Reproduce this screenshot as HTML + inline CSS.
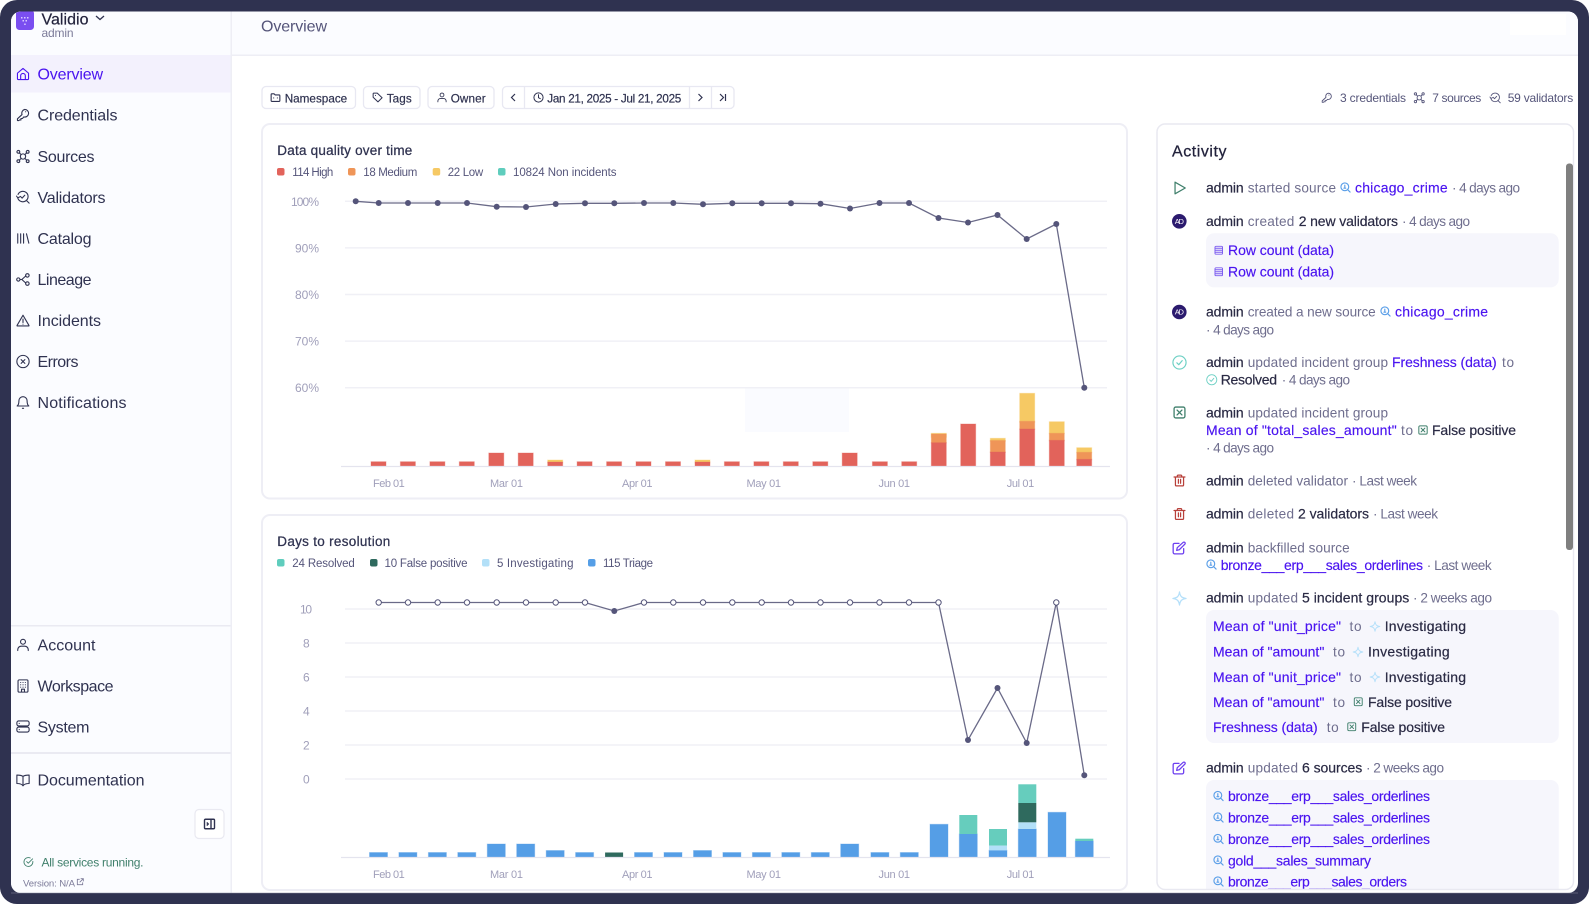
<!DOCTYPE html>
<html lang="en"><head><meta charset="utf-8"><title>Overview</title>
<style>
html,body{margin:0;padding:0;background:#fff;width:1589px;height:905px;overflow:hidden}
svg{display:block}
text{font-family:"Liberation Sans",sans-serif;white-space:pre}
.nav{font-size:16px;fill:#2f3250}
.btn{font-size:11.7px;fill:#2f3250;stroke:#2f3250;stroke-width:.2}
.leg{font-size:11.5px;fill:#55557a}
.ax{font-size:11px;fill:#a09fba}
.tt{font-size:13.5px;fill:#2f3250;stroke:#2f3250;stroke-width:.25}
.g{font-size:13.6px;fill:#6f6e8e}
.d{font-size:14px;fill:#2a2a44;stroke:#2a2a44;stroke-width:.2}
.p{font-size:14px;fill:#4a14f0;stroke:#4a14f0;stroke-width:.15}
.s{fill:none;stroke-width:1.9;stroke-linecap:round;stroke-linejoin:round}
.sm{font-size:12px;fill:#55557a}
</style></head><body>
<svg xmlns="http://www.w3.org/2000/svg" width="1589" height="905" viewBox="0 0 1589 905">
<defs>
<clipPath id="inner"><rect x="11" y="11.5" width="1567" height="881.5" rx="10"/></clipPath>
<clipPath id="act"><rect x="1157" y="124" width="416" height="765"/></clipPath>
<symbol id="home" viewBox="0 0 24 24"><path class="s" stroke-width="2.100" stroke="currentColor" d="M2.500 10.500 12 2.500l9.500 8V20a1.500 1.500 0 0 1-1.500 1.500H4A1.500 1.500 0 0 1 2.500 20zM8 21.500V15a4 4 0 0 1 8 0v6.500"/></symbol>
<symbol id="key" viewBox="0 0 24 24"><path class="s" stroke="currentColor" d="M15 2.500a6.500 6.500 0 1 1-1.500 12.800L11 18H8.500v2.500H6l-1 1H2.500V18.500l7.800-7.300A6.500 6.500 0 0 1 15 2.500zM16.500 6.500h.1"/></symbol>
<symbol id="src" viewBox="0 0 24 24"><g class="s" stroke="currentColor"><circle cx="4" cy="4" r="2.400"/><circle cx="20" cy="4" r="2.400"/><circle cx="4" cy="20" r="2.400"/><circle cx="20" cy="20" r="2.400"/><path d="M6 6l2.500 2.500M18 6l-2.500 2.500M6 18l2.500-2.500M18 18l-2.500-2.500"/><circle cx="12" cy="12" r="4.500"/></g></symbol>
<symbol id="val" viewBox="0 0 24 24"><g class="s" stroke="currentColor"><path d="M3.500 7.500A9 9 0 1 1 3 13.500M3 13.500 1 10.500M3 13.500l3-1.500M17.500 17.500 22.500 22.500M7.500 11l3 3 4.500-5"/></g></symbol>
<symbol id="cat" viewBox="0 0 24 24"><path class="s" stroke="currentColor" d="M3 4v16M8 4v16M13 4v16M18 4l4 16"/></symbol>
<symbol id="lin" viewBox="0 0 24 24"><g class="s" stroke="currentColor"><circle cx="4" cy="12" r="2.800"/><circle cx="19.500" cy="5" r="3"/><circle cx="19.500" cy="19" r="3"/><path d="M7 12h3l6.700-6M10 12l6.700 6"/></g></symbol>
<symbol id="inc" viewBox="0 0 24 24"><path class="s" stroke="currentColor" d="M12 3 1.800 20.500a.6.6 0 0 0 .5.9h19.400a.6.600 0 0 0 .5-.9zM12 9.500v6M12 18.200v.1"/></symbol>
<symbol id="err" viewBox="0 0 24 24"><g class="s" stroke="currentColor"><circle cx="12" cy="12" r="10.500"/><path d="M8.800 8.800l6.400 6.400M15.200 8.800l-6.400 6.400"/></g></symbol>
<symbol id="bell" viewBox="0 0 24 24"><path class="s" stroke="currentColor" d="M12 2a7 7 0 0 0-7 7c0 5-1 7.500-3 9h20c-2-1.500-3-4-3-9a7 7 0 0 0-7-7zM11 22h2"/></symbol>
<symbol id="user" viewBox="0 0 24 24"><g class="s" stroke="currentColor"><circle cx="12" cy="6.500" r="4.200"/><path d="M3 21.500v-1.500a6 6 0 0 1 6-6h6a6 6 0 0 1 6 6v1.500"/></g></symbol>
<symbol id="bld" viewBox="0 0 24 24"><g class="s" stroke="currentColor"><rect x="3.500" y="1.500" width="17" height="21" rx="2"/><path d="M9.500 22v-4.500h5V22M8 6h.1M12 6h.1M16 6h.1M8 10h.1M12 10h.1M16 10h.1M8 14h.1M12 14h.1M16 14h.1"/></g></symbol>
<symbol id="srv" viewBox="0 0 24 24"><g class="s" stroke="currentColor"><rect x="1.500" y="2.500" width="21" height="8.500" rx="3"/><rect x="1.500" y="13" width="21" height="8.500" rx="3"/><path d="M5.500 6.800h.1M5.500 17.200h.1"/></g></symbol>
<symbol id="book" viewBox="0 0 24 24"><path class="s" stroke="currentColor" d="M12 6v16M12 6c-2-2-5-2.500-10.500-2.500V18c5 0 8.500 1 10.500 4 2-3 5.500-4 10.500-4V3.500C17 3.500 14 4 12 6z"/></symbol>
<symbol id="panel" viewBox="0 0 24 24"><g fill="none" stroke="currentColor" stroke-width="2.800" stroke-linejoin="round"><rect x="2" y="2.500" width="20" height="19" rx="2"/><path d="M15 2.500v19M6.500 9l3 3-3 3"/></g></symbol>
<symbol id="chk" viewBox="0 0 24 24"><g class="s" stroke="currentColor"><path d="M21.500 10.500V12A9.700 9.700 0 1 1 16 3.200"/><path d="M8 11l3.500 3.500L21 5"/></g></symbol>
<symbol id="ccirc" viewBox="0 0 24 24"><g class="s" stroke="currentColor"><circle cx="12" cy="12" r="10.500"/><path d="M7.800 12.500l3 3 5.500-6.500"/></g></symbol>
<symbol id="ext" viewBox="0 0 24 24"><g fill="none" stroke="currentColor" stroke-width="2.600"><path d="M11 4H4v16h16v-7M14 2h8v8M22 2 11 13"/></g></symbol>
<symbol id="fold" viewBox="0 0 24 24"><path class="s" style="stroke-width:2.400" stroke="currentColor" d="M2.500 19V5.500a1.500 1.500 0 0 1 1.500-1.500h5l2.500 2.500H20a1.500 1.500 0 0 1 1.500 1.500v11a1.500 1.500 0 0 1-1.500 1.500H4a1.500 1.500 0 0 1-1.500-1.500zM8 13h.1M16 13h.1"/></symbol>
<symbol id="tag" viewBox="0 0 24 24"><path class="s" style="stroke-width:2.200" stroke="currentColor" d="M2.500 3.500v8l10.500 10 9-9-10.500-10H3.500zM7.500 7.500h.1"/></symbol>
<symbol id="clock" viewBox="0 0 24 24"><g class="s" style="stroke-width:2.200" stroke="currentColor"><circle cx="12" cy="12" r="10"/><path d="M12 6v6.500l4 2"/></g></symbol>
<symbol id="mag" viewBox="0 0 24 24"><g class="s" style="stroke-width:2.500" stroke="currentColor"><circle cx="10.500" cy="10.500" r="8.500"/><path d="M16.800 16.800 22 22M10.500 7v5M8.500 13.500h4"/></g></symbol>
<symbol id="rows" viewBox="0 0 24 24"><g class="s" style="stroke-width:2.400" stroke="currentColor"><rect x="2.500" y="2" width="19" height="20" rx="2.500"/><path d="M2.500 7h19M2.500 12h19M2.500 17h19"/></g></symbol>
<symbol id="xsq" viewBox="0 0 24 24"><g class="s" style="stroke-width:2.400" stroke="currentColor"><rect x="2" y="2" width="20" height="20" rx="3"/><path d="M7.500 7.500l9 9M16.500 7.500l-9 9"/></g></symbol>
<symbol id="spark" viewBox="0 0 24 24"><path class="s" style="stroke-width:2" stroke="currentColor" d="M12 1.500C13 8.500 15.500 11 22.500 12 15.500 13 13 15.500 12 22.500 11 15.500 8.500 13 1.500 12 8.500 11 11 8.500 12 1.500z"/></symbol>
<symbol id="play" viewBox="0 0 24 24"><path class="s" style="stroke-width:2.100" stroke="currentColor" d="M3.500 2 21 12 3.500 22z"/></symbol>
<symbol id="trash" viewBox="0 0 24 24"><path class="s" style="stroke-width:2.300" stroke="currentColor" d="M2 5.500h20M8 5.500V3.500a1.500 1.500 0 0 1 1.500-1.500h5A1.500 1.500 0 0 1 16 3.500v2M4.500 5.500V20a2 2 0 0 0 2 2h11a2 2 0 0 0 2-2V5.500M10 10v7M14 10v7"/></symbol>
<symbol id="edit" viewBox="0 0 24 24"><path class="s" style="stroke-width:2.200" stroke="currentColor" d="M12 4H4.500a2.500 2.500 0 0 0-2.500 2.500v13A2.500 2.500 0 0 0 4.500 22h13a2.500 2.500 0 0 0 2.500-2.500V13M19 2.500a2 2 0 0 1 3 3L12.500 15l-4.500 1 1-4.500z"/></symbol>
</defs>

<rect width="1589" height="904" rx="17" fill="#2f3250"/>
<g clip-path="url(#inner)">
<rect x="11" y="11" width="1567" height="883" fill="#fff"/>

<!-- header -->
<rect x="232" y="11" width="1346" height="44" fill="#fbfcff"/>
<rect x="232" y="54.500" width="1346" height="1.500" fill="#eeeef5"/>
<rect x="1510" y="14" width="56" height="21" fill="#fff"/>
<text x="261" y="31.500" class="nav" style="fill:#55557a" textLength="66">Overview</text>

<!-- sidebar -->
<rect x="11" y="11" width="220" height="883" fill="#fbfcff"/>
<rect x="230.500" y="11" width="1.500" height="883" fill="#eeeef5"/>
<rect x="16" y="10" width="18" height="20" rx="3.500" fill="#7a4ef0"/>
<g fill="#d9ccff"><rect x="21" y="17" width="1.500" height="1.500"/><rect x="24" y="17" width="1.500" height="1.500"/><rect x="27" y="17" width="1.500" height="1.500"/><rect x="22.500" y="20" width="1.500" height="1.500"/><rect x="25.500" y="20" width="1.500" height="1.500"/><rect x="24.200" y="23.500" width="1.500" height="1.500"/></g>
<text x="41.500" y="24.500" font-size="16" fill="#22223c" stroke="#22223c" stroke-width=".2" textLength="47">Validio</text>
<path d="M96 16l4 3.500 4-3.500" fill="none" stroke="#2f3250" stroke-width="1.300"/>
<text x="41.500" y="37" font-size="12" fill="#7c7b99" textLength="32">admin</text>

<rect x="11" y="55" width="219.500" height="37.500" fill="#f3f1fd"/>
<g color="#2f3250">
<use href="#home" x="16" y="67" width="14" height="14" color="#4a14f0"/>
<use href="#key" x="16" y="108" width="14" height="14"/>
<use href="#src" x="16" y="149.500" width="14" height="14"/>
<use href="#val" x="16" y="190" width="14" height="14"/>
<use href="#cat" x="16" y="231.500" width="14" height="14"/>
<use href="#lin" x="16" y="272.500" width="14" height="14"/>
<use href="#inc" x="16" y="313.500" width="14" height="14"/>
<use href="#err" x="16" y="354.500" width="14" height="14"/>
<use href="#bell" x="16" y="395.500" width="14" height="14"/>
<use href="#user" x="16" y="638" width="14" height="14"/>
<use href="#bld" x="16" y="679" width="14" height="14"/>
<use href="#srv" x="16" y="719.500" width="14" height="14"/>
<use href="#book" x="16" y="773" width="14" height="14"/>
</g>
<text x="37.500" y="79.500" class="nav" style="fill:#4a14f0" textLength="65.500">Overview</text>
<text x="37.500" y="120.500" class="nav" textLength="80">Credentials</text>
<text x="37.500" y="162" class="nav" textLength="57">Sources</text>
<text x="37.500" y="203" class="nav" textLength="68">Validators</text>
<text x="37.500" y="244" class="nav" textLength="54">Catalog</text>
<text x="37.500" y="285" class="nav" textLength="54">Lineage</text>
<text x="37.500" y="326" class="nav" textLength="63.500">Incidents</text>
<text x="37.500" y="367" class="nav" textLength="41">Errors</text>
<text x="37.500" y="408" class="nav" textLength="89">Notifications</text>
<rect x="11" y="625" width="219.500" height="1.500" fill="#eaeaf2"/>
<text x="37.500" y="650.500" class="nav" textLength="58">Account</text>
<text x="37.500" y="691.500" class="nav" textLength="76">Workspace</text>
<text x="37.500" y="732.500" class="nav" textLength="52">System</text>
<rect x="11" y="752" width="219.500" height="2" fill="#eaeaf2"/>
<text x="37.500" y="785.500" class="nav" textLength="107">Documentation</text>
<rect x="195" y="809.500" width="29" height="29" rx="4" fill="#fff" stroke="#e9e9f1" stroke-width="1.200"/>
<use href="#panel" x="203.500" y="818" width="12" height="12" color="#2f3250"/>
<use href="#chk" x="23" y="856.500" width="11" height="11" color="#3f7f6b"/>
<text x="41.500" y="866.500" font-size="12" fill="#3f7f6b" textLength="102">All services running.</text>
<text x="23" y="886.500" font-size="9.600" fill="#7c7b99" textLength="52">Version: N/A</text>
<use href="#ext" x="76" y="878" width="8" height="8" color="#7c7b99"/>

<!-- toolbar -->
<g fill="#fff" stroke="#e8e8f2" stroke-width="1.300">
<rect x="262" y="86.500" width="93.500" height="22" rx="4"/>
<rect x="363.500" y="86.500" width="56.500" height="22" rx="4"/>
<rect x="428" y="86.500" width="66" height="22" rx="4"/>
<rect x="502.500" y="86.500" width="231.500" height="22" rx="4"/>
<path d="M524.500 86.500v22M689.500 86.500v22M711.500 86.500v22" fill="none"/>
</g>
<g color="#2f3250">
<use href="#fold" x="270" y="92" width="11" height="11"/>
<use href="#tag" x="372" y="92" width="11" height="11"/>
<use href="#user" x="436.500" y="92" width="11" height="11"/>
<use href="#clock" x="533" y="92" width="11" height="11"/>
</g>
<text x="284.700" y="102.500" class="btn" textLength="62.500">Namespace</text>
<text x="386.700" y="102.500" class="btn" textLength="25">Tags</text>
<text x="450.700" y="102.500" class="btn" textLength="35">Owner</text>
<text x="547.300" y="102.500" class="btn" textLength="134">Jan 21, 2025 - Jul 21, 2025</text>
<path d="M515 94l-3.500 3.500 3.500 3.500M698.500 94l3.500 3.500-3.500 3.500M720 94l3.500 3.500-3.500 3.500M725.500 94v7" fill="none" stroke="#2f3250" stroke-width="1.200"/>

<!-- right summary -->
<g color="#55557a">
<use href="#key" x="1321" y="92" width="11.500" height="11.500"/>
<use href="#src" x="1413.500" y="92" width="11.500" height="11.500"/>
<use href="#val" x="1489.500" y="92" width="11.500" height="11.500"/>
</g>
<text x="1340" y="102" class="sm" textLength="66">3 credentials</text>
<text x="1432.300" y="102" class="sm" textLength="49">7 sources</text>
<text x="1507.700" y="102" class="sm" textLength="65.500">59 validators</text>

<!-- card 1 -->
<rect x="262" y="124" width="865" height="374.500" rx="8" fill="#fff" stroke="#eeeef5" stroke-width="2"/>
<rect x="745" y="388" width="104" height="44" fill="#fafbff"/>
<text x="277.300" y="155" class="tt" textLength="135">Data quality over time</text>
<rect x="277" y="168" width="7.500" height="7.500" rx="2" fill="#e2635b"/>
<text x="292.300" y="176" class="leg" textLength="41">114 High</text>
<rect x="348" y="168" width="7.500" height="7.500" rx="2" fill="#ef9558"/>
<text x="363.300" y="176" class="leg" textLength="54">18 Medium</text>
<rect x="432.700" y="168" width="7.500" height="7.500" rx="2" fill="#f6c964"/>
<text x="447.700" y="176" class="leg" textLength="35.500">22 Low</text>
<rect x="498" y="168" width="7.500" height="7.500" rx="2" fill="#5fcdbd"/>
<text x="513" y="176" class="leg" textLength="103.500">10824 Non incidents</text>
<path d="M345 201.300H1107M345 247.900H1107M345 294.500H1107M345 341.100H1107M345 387.700H1107" fill="none" stroke="#f0f0f6" stroke-width="1.500"/>
<text x="291" y="206" class="ax" font-size="12" style="font-size:12px" textLength="28">100%</text>
<text x="295" y="252.500" class="ax" style="font-size:12px" textLength="24">90%</text>
<text x="295" y="299" class="ax" style="font-size:12px" textLength="24">80%</text>
<text x="295" y="345.500" class="ax" style="font-size:12px" textLength="24">70%</text>
<text x="295" y="392" class="ax" style="font-size:12px" textLength="24">60%</text>
<polyline fill="none" stroke="#6a6a88" stroke-width="1.300" points="355.700,201.300 378.700,203 408,203 437.700,203 467,203 496.700,206.700 526,207 555.700,204 585,203.300 614.300,203.300 644,203 673.300,203 703,204.300 732.300,203.300 761.700,203.300 791,203.300 820.500,203.700 850,208.500 879.500,203 909,203 938.500,218 968,222.500 997.500,215 1026.700,239 1056.300,224 1084.300,387.700"/>
<g fill="#55557a">
<circle cx="355.700" cy="201.300" r="3"/><circle cx="378.700" cy="203" r="3"/><circle cx="408" cy="203" r="3"/><circle cx="437.700" cy="203" r="3"/><circle cx="467" cy="203" r="3"/><circle cx="496.700" cy="206.700" r="3"/><circle cx="526" cy="207" r="3"/><circle cx="555.700" cy="204" r="3"/><circle cx="585" cy="203.300" r="3"/><circle cx="614.300" cy="203.300" r="3"/><circle cx="644" cy="203" r="3"/><circle cx="673.300" cy="203" r="3"/><circle cx="703" cy="204.300" r="3"/><circle cx="732.300" cy="203.300" r="3"/><circle cx="761.700" cy="203.300" r="3"/><circle cx="791" cy="203.300" r="3"/><circle cx="820.500" cy="203.700" r="3"/><circle cx="850" cy="208.500" r="3"/><circle cx="879.500" cy="203" r="3"/><circle cx="909" cy="203" r="3"/><circle cx="938.500" cy="218" r="3"/><circle cx="968" cy="222.500" r="3"/><circle cx="997.500" cy="215" r="3"/><circle cx="1026.700" cy="239" r="3"/><circle cx="1056.300" cy="224" r="3"/><circle cx="1084.300" cy="387.700" r="3"/>
</g>
<!-- bars 1 -->
<g fill="#f6c964" stroke="#f6c964" stroke-opacity=".35">
<rect x="547.700" y="460" width="15" height="3"/><rect x="695" y="460" width="15" height="3"/>
<rect x="931.300" y="433.300" width="15" height="4"/><rect x="990.300" y="438.300" width="15" height="3"/>
<rect x="1019.700" y="393.300" width="15" height="29"/><rect x="1049.300" y="421.700" width="15" height="12"/><rect x="1076.700" y="447.700" width="15" height="5"/>
</g>
<g fill="#ef9558" stroke="#ef9558" stroke-opacity=".35">
<rect x="931.300" y="434" width="15" height="9"/><rect x="990.300" y="440.500" width="15" height="12"/>
<rect x="1019.700" y="421.300" width="15" height="8"/><rect x="1049.300" y="433.300" width="15" height="7.500"/><rect x="1076.700" y="452.300" width="15" height="7.500"/>
</g>
<g fill="#e2635b" stroke="#e2635b" stroke-opacity=".35">
<rect x="371" y="461.700" width="15" height="4.500"/><rect x="400.400" y="461.700" width="15" height="4.500"/><rect x="429.900" y="461.700" width="15" height="4.500"/><rect x="459.300" y="461.700" width="15" height="4.500"/>
<rect x="488.800" y="453" width="15" height="13.200"/><rect x="518.200" y="453" width="15" height="13.200"/>
<rect x="547.700" y="462" width="15" height="4.200"/>
<rect x="577.100" y="461.700" width="15" height="4.500"/><rect x="606.600" y="461.700" width="15" height="4.500"/><rect x="636" y="461.700" width="15" height="4.500"/><rect x="665.500" y="461.700" width="15" height="4.500"/>
<rect x="695" y="462" width="15" height="4.200"/>
<rect x="724.400" y="461.700" width="15" height="4.500"/><rect x="753.900" y="461.700" width="15" height="4.500"/><rect x="783.300" y="461.700" width="15" height="4.500"/><rect x="812.800" y="461.700" width="15" height="4.500"/>
<rect x="842.200" y="453" width="15" height="13.200"/>
<rect x="872.400" y="461.700" width="15" height="4.500"/><rect x="901.700" y="461.700" width="15" height="4.500"/>
<rect x="931.300" y="442.700" width="15" height="23.500"/><rect x="960.700" y="424" width="15" height="42.200"/><rect x="990.300" y="452" width="15" height="14.200"/><rect x="1019.700" y="429" width="15" height="37.200"/><rect x="1049.300" y="440.300" width="15" height="25.900"/><rect x="1076.700" y="459.300" width="15" height="6.900"/>
</g>
<path d="M341 466.500H1110" stroke="#e4e4ee" stroke-width="1.200"/>
<text x="373" y="487" class="ax" textLength="31.700">Feb 01</text>
<text x="490" y="487" class="ax" textLength="33">Mar 01</text>
<text x="622" y="487" class="ax" textLength="30.500">Apr 01</text>
<text x="746.500" y="487" class="ax" textLength="34.500">May 01</text>
<text x="878.500" y="487" class="ax" textLength="31.500">Jun 01</text>
<text x="1006.700" y="487" class="ax" textLength="27.500">Jul 01</text>

<!-- card 2 -->
<rect x="262" y="515" width="865" height="375" rx="8" fill="#fff" stroke="#eeeef5" stroke-width="2"/>
<text x="277.300" y="546" class="tt" textLength="113">Days to resolution</text>
<rect x="277" y="559" width="7.500" height="7.500" rx="2" fill="#5fcdbd"/>
<text x="292.300" y="567" class="leg" textLength="62.500">24 Resolved</text>
<rect x="370" y="559" width="7.500" height="7.500" rx="2" fill="#2f6a5e"/>
<text x="384.500" y="567" class="leg" textLength="83">10 False positive</text>
<rect x="482" y="559" width="7.500" height="7.500" rx="2" fill="#b3e0f8"/>
<text x="497" y="567" class="leg" textLength="76.500">5 Investigating</text>
<rect x="588" y="559" width="7.500" height="7.500" rx="2" fill="#559ee6"/>
<text x="603" y="567" class="leg" textLength="50">115 Triage</text>
<path d="M345 609H1107M345 643H1107M345 677H1107M345 711H1107M345 745H1107M345 779H1107" fill="none" stroke="#f0f0f6" stroke-width="1.500"/>
<text x="300" y="613.500" class="ax" style="font-size:12px" textLength="12">10</text>
<text x="303" y="647.500" class="ax" style="font-size:12px">8</text>
<text x="303" y="681.500" class="ax" style="font-size:12px">6</text>
<text x="303" y="715.500" class="ax" style="font-size:12px">4</text>
<text x="303" y="749.500" class="ax" style="font-size:12px">2</text>
<text x="303" y="783.500" class="ax" style="font-size:12px">0</text>
<polyline fill="none" stroke="#6a6a88" stroke-width="1.300" points="378.700,602.500 408,602.500 437.700,602.500 467,602.500 496.700,602.500 526,602.500 555.700,602.500 585,602.500 614.300,611 644,602.500 673.300,602.500 703,602.500 732.300,602.500 761.700,602.500 791,602.500 820.500,602.500 850,602.500 879.500,602.500 909,602.500 938.500,602.500 968,740 997.500,688 1026.700,743 1056.300,602.500 1084.300,775.300"/>
<g fill="#fff" stroke="#55557a" stroke-width="1">
<circle cx="378.700" cy="602.500" r="2.700"/><circle cx="408" cy="602.500" r="2.700"/><circle cx="437.700" cy="602.500" r="2.700"/><circle cx="467" cy="602.500" r="2.700"/><circle cx="496.700" cy="602.500" r="2.700"/><circle cx="526" cy="602.500" r="2.700"/><circle cx="555.700" cy="602.500" r="2.700"/><circle cx="585" cy="602.500" r="2.700"/><circle cx="644" cy="602.500" r="2.700"/><circle cx="673.300" cy="602.500" r="2.700"/><circle cx="703" cy="602.500" r="2.700"/><circle cx="732.300" cy="602.500" r="2.700"/><circle cx="761.700" cy="602.500" r="2.700"/><circle cx="791" cy="602.500" r="2.700"/><circle cx="820.500" cy="602.500" r="2.700"/><circle cx="850" cy="602.500" r="2.700"/><circle cx="879.500" cy="602.500" r="2.700"/><circle cx="909" cy="602.500" r="2.700"/><circle cx="938.500" cy="602.500" r="2.700"/><circle cx="1056.300" cy="602.500" r="2.700"/>
</g>
<g fill="#55557a"><circle cx="614.300" cy="611" r="3"/><circle cx="968" cy="740" r="3"/><circle cx="997.500" cy="688" r="3"/><circle cx="1026.700" cy="743" r="3"/><circle cx="1084.300" cy="775.300" r="3"/></g>
<!-- bars 2 -->
<g fill="#559ee6" stroke="#559ee6" stroke-opacity=".35">
<rect x="369.500" y="852.500" width="18" height="4.700"/><rect x="398.900" y="852.500" width="18" height="4.700"/><rect x="428.400" y="852.500" width="18" height="4.700"/><rect x="457.800" y="852.500" width="18" height="4.700"/>
<rect x="487.300" y="844" width="18" height="13.200"/><rect x="516.700" y="844" width="18" height="13.200"/><rect x="546.200" y="850.500" width="18" height="6.700"/><rect x="575.600" y="852.500" width="18" height="4.700"/>
<rect x="634.500" y="852.500" width="18" height="4.700"/><rect x="664" y="852.500" width="18" height="4.700"/><rect x="693.500" y="850.500" width="18" height="6.700"/><rect x="722.900" y="852.500" width="18" height="4.700"/><rect x="752.400" y="852.500" width="18" height="4.700"/><rect x="781.800" y="852.500" width="18" height="4.700"/><rect x="811.300" y="852.500" width="18" height="4.700"/>
<rect x="840.700" y="844" width="18" height="13.200"/><rect x="870.900" y="852.500" width="18" height="4.700"/><rect x="900.300" y="852.500" width="18" height="4.700"/>
<rect x="930" y="824.300" width="18" height="32.900"/><rect x="959.300" y="834" width="18" height="23.200"/><rect x="989" y="850.300" width="18" height="6.900"/><rect x="1018.300" y="829" width="18" height="28.200"/><rect x="1048" y="812.300" width="18" height="44.900"/><rect x="1075.300" y="841" width="18" height="16.200"/>
</g>
<rect x="605.100" y="852.500" width="18" height="4.700" fill="#2f6a5e"/>
<g fill="#66cdbd"><rect x="959.300" y="815" width="18" height="19"/><rect x="989" y="829" width="18" height="16.700"/><rect x="1018.300" y="784.300" width="18" height="18.700"/><rect x="1075.300" y="838.700" width="18" height="2.300"/></g>
<g fill="#b3e0f8"><rect x="989" y="845.700" width="18" height="4.600"/><rect x="1018.300" y="822.300" width="18" height="6.700"/></g>
<rect x="1018.300" y="803" width="18" height="19.300" fill="#2f6a5e"/>
<path d="M341 857.500H1110" stroke="#e4e4ee" stroke-width="1.200"/>
<text x="373" y="878" class="ax" textLength="31.700">Feb 01</text>
<text x="490" y="878" class="ax" textLength="33">Mar 01</text>
<text x="622" y="878" class="ax" textLength="30.500">Apr 01</text>
<text x="746.500" y="878" class="ax" textLength="34.500">May 01</text>
<text x="878.500" y="878" class="ax" textLength="31.500">Jun 01</text>
<text x="1006.700" y="878" class="ax" textLength="27.500">Jul 01</text>

<!-- activity card -->
<rect x="1157" y="124" width="416.500" height="765.500" rx="8" fill="#fff"/>
<text x="1172" y="156.500" font-size="16" fill="#22223c" stroke="#22223c" stroke-width=".25" textLength="54.500">Activity</text>
<g clip-path="url(#act)">
<rect x="1206" y="233.300" width="352.700" height="54" rx="8" fill="#f6f6fc"/>
<rect x="1206" y="610" width="352.700" height="133" rx="8" fill="#f6f6fc"/>
<rect x="1206" y="780" width="352.700" height="130" rx="8" fill="#f6f6fc"/>

<!-- left icons -->
<use href="#play" x="1173" y="181" width="14" height="14" color="#3f7f6b"/>
<circle cx="1179.300" cy="221.300" r="7.300" fill="#2b1a6e"/><text x="1174.700" y="224" font-size="7.500" fill="#fff" textLength="9.200">AD</text>
<circle cx="1179.300" cy="312" r="7.300" fill="#2b1a6e"/><text x="1174.700" y="314.700" font-size="7.500" fill="#fff" textLength="9.200">AD</text>
<use href="#ccirc" x="1172" y="355" width="15" height="15" color="#6dd0c4"/>
<use href="#xsq" x="1173" y="406" width="13" height="13" color="#3f7f6b"/>
<use href="#trash" x="1173" y="473.500" width="13" height="14" color="#b8403a"/>
<use href="#trash" x="1173" y="507" width="13" height="14" color="#b8403a"/>
<use href="#edit" x="1172" y="541" width="14" height="14" color="#6d3ff0"/>
<use href="#spark" x="1172" y="591" width="15" height="15" color="#b5e0fa"/>
<use href="#edit" x="1172" y="761" width="14" height="14" color="#6d3ff0"/>

<!-- row 1 -->
<text x="1206" y="192.700" class="d" textLength="37.700">admin</text>
<text x="1247.700" y="192.700" class="g" textLength="88.300">started source</text>
<use href="#mag" x="1340" y="182" width="11" height="11" color="#5b9fe8"/>
<text x="1355" y="192.700" class="p" textLength="92.700">chicago_crime</text>
<text x="1452" y="192.700" class="g" textLength="68">· 4 days ago</text>
<!-- row 2 -->
<text x="1206" y="226" class="d" textLength="37.700">admin</text>
<text x="1247.700" y="226" class="g" textLength="46.600">created</text>
<text x="1298.700" y="226" class="d" textLength="99.300">2 new validators</text>
<text x="1402" y="226" class="g" textLength="68">· 4 days ago</text>
<use href="#rows" x="1214" y="245.500" width="9.500" height="9.500" color="#7c5cf0"/>
<text x="1228" y="255" class="p" textLength="106">Row count (data)</text>
<use href="#rows" x="1214" y="267" width="9.500" height="9.500" color="#7c5cf0"/>
<text x="1228" y="276.400" class="p" textLength="106">Row count (data)</text>
<!-- row 3 -->
<text x="1206" y="316.700" class="d" textLength="37.700">admin</text>
<text x="1247.700" y="316.700" class="g" textLength="128">created a new source</text>
<use href="#mag" x="1380" y="306" width="11" height="11" color="#5b9fe8"/>
<text x="1395" y="316.700" class="p" textLength="93">chicago_crime</text>
<text x="1206" y="334.400" class="g" textLength="68">· 4 days ago</text>
<!-- row 4 -->
<text x="1206" y="367" class="d" textLength="37.700">admin</text>
<text x="1247.700" y="367" class="g" textLength="140.300">updated incident group</text>
<text x="1392" y="367" class="p" textLength="104.700">Freshness (data)</text>
<text x="1502" y="367" class="g" textLength="12">to</text>
<use href="#ccirc" x="1206" y="374" width="11.500" height="11.500" color="#6dd0c4"/>
<text x="1220.700" y="384.700" class="d" textLength="56.300">Resolved</text>
<text x="1281.700" y="384.700" class="g" textLength="68.300">· 4 days ago</text>
<!-- row 5 -->
<text x="1206" y="417.400" class="d" textLength="37.700">admin</text>
<text x="1247.700" y="417.400" class="g" textLength="140.300">updated incident group</text>
<text x="1206" y="435" class="p" textLength="190.700">Mean of "total_sales_amount"</text>
<text x="1401" y="435" class="g" textLength="12">to</text>
<use href="#xsq" x="1418" y="425" width="10" height="10" color="#3f7f6b"/>
<text x="1432" y="435" class="d" textLength="84">False positive</text>
<text x="1206" y="452.700" class="g" textLength="68">· 4 days ago</text>
<!-- row 6 -->
<text x="1206" y="485.400" class="d" textLength="37.700">admin</text>
<text x="1247.700" y="485.400" class="g" textLength="100.300">deleted validator</text>
<text x="1352" y="485.400" class="g" textLength="65">· Last week</text>
<!-- row 7 -->
<text x="1206" y="518.700" class="d" textLength="37.700">admin</text>
<text x="1247.700" y="518.700" class="g" textLength="46.300">deleted</text>
<text x="1298" y="518.700" class="d" textLength="71">2 validators</text>
<text x="1373" y="518.700" class="g" textLength="65">· Last week</text>
<!-- row 8 -->
<text x="1206" y="552.400" class="d" textLength="37.700">admin</text>
<text x="1247.700" y="552.400" class="g" textLength="102">backfilled source</text>
<use href="#mag" x="1206" y="559" width="11" height="11" color="#5b9fe8"/>
<text x="1220.700" y="570" class="p" textLength="202.300">bronze___erp___sales_orderlines</text>
<text x="1426.700" y="570" class="g" textLength="65">· Last week</text>
<!-- row 9 -->
<text x="1206" y="602.700" class="d" textLength="37.700">admin</text>
<text x="1247.700" y="602.700" class="g" textLength="50.300">updated</text>
<text x="1302" y="602.700" class="d" textLength="107.300">5 incident groups</text>
<text x="1413" y="602.700" class="g" textLength="79">· 2 weeks ago</text>

<text x="1213" y="631.200" class="p" textLength="128">Mean of "unit_price"</text>
<text x="1349.500" y="631.200" class="g" textLength="12">to</text>
<use href="#spark" x="1369.500" y="621" width="11" height="11" color="#b5e0fa"/>
<text x="1384.700" y="631.200" class="d" textLength="81.300">Investigating</text>

<text x="1213" y="656.700" class="p" textLength="111.300">Mean of "amount"</text>
<text x="1333" y="656.700" class="g" textLength="12">to</text>
<use href="#spark" x="1352.500" y="646.500" width="11" height="11" color="#b5e0fa"/>
<text x="1368" y="656.700" class="d" textLength="81.700">Investigating</text>

<text x="1213" y="682" class="p" textLength="128">Mean of "unit_price"</text>
<text x="1349.500" y="682" class="g" textLength="12">to</text>
<use href="#spark" x="1369.500" y="671.500" width="11" height="11" color="#b5e0fa"/>
<text x="1384.700" y="682" class="d" textLength="81.300">Investigating</text>

<text x="1213" y="707" class="p" textLength="111.300">Mean of "amount"</text>
<text x="1333" y="707" class="g" textLength="12">to</text>
<use href="#xsq" x="1353.500" y="697" width="9.500" height="9.500" color="#3f7f6b"/>
<text x="1368" y="707" class="d" textLength="84">False positive</text>

<text x="1213" y="732" class="p" textLength="104.700">Freshness (data)</text>
<text x="1326.700" y="732" class="g" textLength="12">to</text>
<use href="#xsq" x="1347" y="722" width="9.500" height="9.500" color="#3f7f6b"/>
<text x="1361.300" y="732" class="d" textLength="83.700">False positive</text>
<!-- row 10 -->
<text x="1206" y="772.400" class="d" textLength="37.700">admin</text>
<text x="1247.700" y="772.400" class="g" textLength="50.300">updated</text>
<text x="1302" y="772.400" class="d" textLength="60.300">6 sources</text>
<text x="1366" y="772.400" class="g" textLength="78">· 2 weeks ago</text>

<use href="#mag" x="1213" y="790.500" width="11" height="11" color="#5b9fe8"/>
<text x="1228" y="801" class="p" textLength="202">bronze___erp___sales_orderlines</text>
<use href="#mag" x="1213" y="812" width="11" height="11" color="#5b9fe8"/>
<text x="1228" y="822.700" class="p" textLength="202">bronze___erp___sales_orderlines</text>
<use href="#mag" x="1213" y="833.500" width="11" height="11" color="#5b9fe8"/>
<text x="1228" y="844" class="p" textLength="202">bronze___erp___sales_orderlines</text>
<use href="#mag" x="1213" y="855" width="11" height="11" color="#5b9fe8"/>
<text x="1228" y="865.700" class="p" textLength="143">gold___sales_summary</text>
<use href="#mag" x="1213" y="876" width="11" height="11" color="#5b9fe8"/>
<text x="1228" y="886.700" class="p" textLength="179">bronze___erp___sales_orders</text>
</g>
<rect x="1157" y="124" width="416.500" height="765.500" rx="8" fill="none" stroke="#e9e9f1" stroke-width="1.500"/>
<rect x="1566" y="163.500" width="7" height="386.500" rx="3" fill="#7f7f7f"/>
</g>
<rect x="11" y="892.500" width="1567" height="1" fill="#8a8ba0" opacity=".5"/>
</svg>
</body></html>
